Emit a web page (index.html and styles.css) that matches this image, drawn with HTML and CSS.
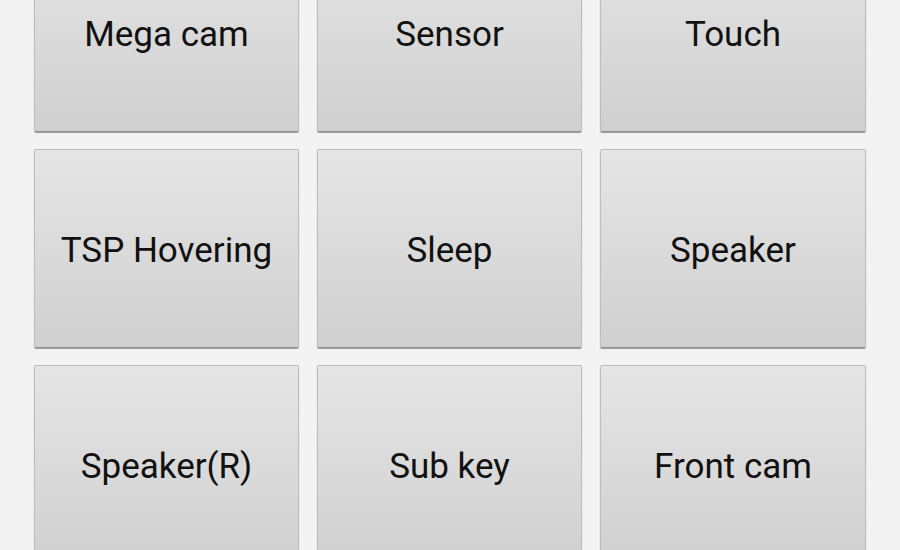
FILE: index.html
```html
<!DOCTYPE html>
<html>
<head>
<meta charset="utf-8">
<link rel="stylesheet" href="styles.css">
</head>
<body>
<div class="grid">
  <div class="btn">Mega cam</div>
  <div class="btn">Sensor</div>
  <div class="btn">Touch</div>
  <div class="btn">TSP Hovering</div>
  <div class="btn">Sleep</div>
  <div class="btn">Speaker</div>
  <div class="btn">Speaker(R)</div>
  <div class="btn">Sub key</div>
  <div class="btn">Front cam</div>
</div>
</body>
</html>
```
FILE: styles.css
```css
html, body {
  margin: 0;
  padding: 0;
  background: #f3f3f3;
  overflow: hidden;
}
.grid {
  display: grid;
  grid-template-columns: 265px 265px 266px;
  grid-auto-rows: 199px;
  column-gap: 18px;
  row-gap: 17px;
  padding: 0 34px;
  margin-top: -67px;
}
.btn {
  box-sizing: border-box;
  display: flex;
  align-items: center;
  justify-content: center;
  border: 1px solid #bdbdbd;
  border-bottom-color: #8f8f8f;
  border-radius: 2px;
  background: linear-gradient(to bottom, #e5e5e5 0%, #d0d0d0 100%);
  box-shadow: 0 1px 1px rgba(0,0,0,0.35);
  font-family: Roboto, "Liberation Sans", sans-serif;
  font-size: 35px;
  color: #111;
  padding-top: 4px;
}
```
